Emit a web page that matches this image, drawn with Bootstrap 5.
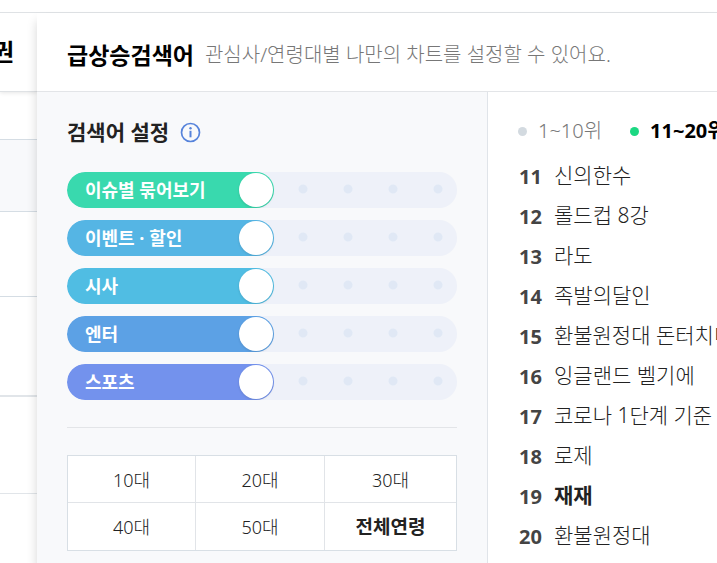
<!DOCTYPE html>
<html lang="ko">
<head>
<meta charset="utf-8">
<meta name="viewport" content="width=device-width, initial-scale=1">
<title>급상승검색어</title>
<link href="https://cdn.jsdelivr.net/npm/bootstrap@5.3.0/dist/css/bootstrap.min.css" rel="stylesheet">
<style>
body{font-family:"Open Sans","Noto Sans CJK KR",sans-serif;color:#222;overflow:hidden}
.shell{border-top:1px solid #dfe2e5;margin-top:12px;min-height:calc(100vh - 12px)}
.behind{width:37px}
.behind-head{height:79px;border-bottom:1px solid #dfe2e5;box-shadow:0 1px 4px rgba(0,0,0,.1);padding-right:23px;font-size:24px;color:#000}
.behind-row{border-bottom:1px solid #d5dde4}
.r1{height:48px}.r2{height:72px;background:#f8f9fb}.r3{height:85px}.r4{height:100px;border-bottom-width:2px;border-color:#e1e5e9}.r5{height:97px;border-color:#e1e5e9}
.panel{min-width:0;box-shadow:0 8px 10px rgba(0,0,0,.16);z-index:1}
.panel-head{height:79px;border-bottom:1px solid #e3e5e8;padding:5px 30px 0;gap:11px;line-height:32px}
.panel-head h1{font-size:23px;line-height:32px;color:#000}
.panel-head p{font-size:20px;color:#777}
.settings{width:451px;background:#f8f9fb;border-right:1px solid #e0e4e9;padding:24px 30px 0}
.settings h2{font-size:21px;line-height:32px}
.settings-title{gap:10px}
.info-btn{width:22px;height:22px}
.sliders{gap:12px;margin-top:24px;padding-bottom:27px;border-bottom:1px solid #e3e5e8}
.pill{height:36px;border-radius:18px;overflow:hidden;background:radial-gradient(circle at 22px 17px,#e0e8f5 4px,transparent 5px) right -4px top 0/45px 36px,#eef1f9}
.pill>*{grid-area:1/1}
.pill-fill{width:53%;border-radius:18px;background:var(--tone)}
.pill label{padding-left:18px;font-size:18px;line-height:36px;color:#fff;pointer-events:none;z-index:1;justify-self:start}
.pill input{appearance:none;-webkit-appearance:none;background:none;height:36px;margin:0;padding:0 12px 0 0;width:100%;cursor:pointer}
.pill input::-webkit-slider-thumb{-webkit-appearance:none;width:36px;height:36px;border:1px solid transparent;border-radius:50%;background:#fff content-box;filter:drop-shadow(0 1px 1px rgba(0,0,0,.12))}
.pill input::-moz-range-thumb{width:34px;height:34px;border:1px solid transparent;border-radius:50%;background:#fff content-box}
.tone-issue{--tone:#39d9ae}.tone-event{--tone:#55b5e4}.tone-news{--tone:#50bde3}.tone-ent{--tone:#5ca1e5}.tone-sport{--tone:#7392ed}
.ages{display:grid;grid-template:46px 47px/127fr 128fr 131fr;gap:1px;margin-top:27px;border:1px solid #d8dfe5;background:#e1e4e8}
.ages button{border:0;background:#fff;font-size:18px;padding:2px 0 0;color:#222}
.ages button[aria-pressed=true]{font-size:19px}
.ranking{min-width:0;padding:23px 0 0 30px}
.range-tabs{gap:28px;line-height:32px}
.range-tabs button{border:0;background:none;padding:0;font-size:20px;color:#777;gap:11px}
.range-tabs button::before{content:"";width:9px;height:9px;border-radius:50%;background:#d3dae0}
.range-tabs .on{color:#000}
.range-tabs .on::before{background:#1bd882}
.ranks{margin-top:8px}
.ranks a{height:40px;line-height:40px;gap:12px;color:#222}
.ranks b{font-size:20px;line-height:44px;color:#444;width:24px;padding-left:1px}
.ranks span,.ranks strong{font-size:21px}
.ranks span,.panel-head p,.range-tabs button:not(.on),.ages button:not(.fw-bold){font-family:"Noto Sans","Noto Sans CJK KR Light","Noto Sans CJK KR",sans-serif;font-weight:300}
</style>
</head>
<body class="bg-white">
<div class="shell d-flex">
  <div class="behind flex-shrink-0 overflow-hidden">
    <div class="behind-head d-flex align-items-center justify-content-end fw-bold">권</div>
    <div class="behind-row r1"></div><div class="behind-row r2"></div><div class="behind-row r3"></div><div class="behind-row r4"></div><div class="behind-row r5"></div>
  </div>
  <main class="panel position-relative flex-grow-1 bg-white d-flex flex-column overflow-hidden">
    <header class="panel-head d-flex align-items-center text-nowrap flex-shrink-0">
      <h1 class="fw-bold m-0">급상승검색어</h1>
      <p class="m-0">관심사/연령대별 나만의 차트를 설정할 수 있어요.</p>
    </header>
    <div class="d-flex flex-grow-1">
      <section class="settings flex-shrink-0">
        <div class="settings-title d-flex align-items-center">
          <h2 class="m-0 fw-bold">검색어 설정</h2>
          <button class="info-btn btn p-0 border-0 d-flex" type="button" aria-label="도움말">
            <svg width="22" height="22" viewBox="0 0 22 22" fill="none" stroke="#5683db" aria-hidden="true"><circle cx="11.5" cy="11.5" r="9" stroke-width="1.7"/><path d="M11.5 9.8v6.5" stroke-width="2"/><circle cx="11.5" cy="7.3" r="1.2" fill="#5683db" stroke="none"/></svg>
          </button>
        </div>
        <div class="sliders d-flex flex-column">
          <div class="pill tone-issue d-grid"><div class="pill-fill"></div><label class="fw-bold" for="s1">이슈별 묶어보기</label><input id="s1" type="range" min="0" max="8" value="4"></div>
          <div class="pill tone-event d-grid"><div class="pill-fill"></div><label class="fw-bold" for="s2">이벤트 · 할인</label><input id="s2" type="range" min="0" max="8" value="4"></div>
          <div class="pill tone-news d-grid"><div class="pill-fill"></div><label class="fw-bold" for="s3">시사</label><input id="s3" type="range" min="0" max="8" value="4"></div>
          <div class="pill tone-ent d-grid"><div class="pill-fill"></div><label class="fw-bold" for="s4">엔터</label><input id="s4" type="range" min="0" max="8" value="4"></div>
          <div class="pill tone-sport d-grid"><div class="pill-fill"></div><label class="fw-bold" for="s5">스포츠</label><input id="s5" type="range" min="0" max="8" value="4"></div>
        </div>
        <div class="ages">
          <button type="button">10대</button><button type="button">20대</button><button type="button">30대</button>
          <button type="button">40대</button><button type="button">50대</button><button type="button" class="fw-bold" aria-pressed="true">전체연령</button>
        </div>
      </section>
      <section class="ranking flex-grow-1 overflow-hidden text-nowrap">
        <div class="range-tabs d-flex">
          <button type="button" class="d-flex align-items-center flex-shrink-0">1~10위</button>
          <button type="button" class="on fw-bold d-flex align-items-center flex-shrink-0">11~20위</button>
        </div>
        <ol class="ranks list-unstyled mb-0">
          <li><a href="#" class="d-flex text-decoration-none"><b>11</b><span>신의한수</span></a></li>
          <li><a href="#" class="d-flex text-decoration-none"><b>12</b><span>롤드컵 8강</span></a></li>
          <li><a href="#" class="d-flex text-decoration-none"><b>13</b><span>라도</span></a></li>
          <li><a href="#" class="d-flex text-decoration-none"><b>14</b><span>족발의달인</span></a></li>
          <li><a href="#" class="d-flex text-decoration-none"><b>15</b><span>환불원정대 돈터치미</span></a></li>
          <li><a href="#" class="d-flex text-decoration-none"><b>16</b><span>잉글랜드 벨기에</span></a></li>
          <li><a href="#" class="d-flex text-decoration-none"><b>17</b><span>코로나 1단계 기준</span></a></li>
          <li><a href="#" class="d-flex text-decoration-none"><b>18</b><span>로제</span></a></li>
          <li><a href="#" class="d-flex text-decoration-none"><b>19</b><strong>재재</strong></a></li>
          <li><a href="#" class="d-flex text-decoration-none"><b>20</b><span>환불원정대</span></a></li>
        </ol>
      </section>
    </div>
  </main>
</div>
<script src="https://cdn.jsdelivr.net/npm/bootstrap@5.3.0/dist/js/bootstrap.bundle.min.js"></script>
</body>
</html>
